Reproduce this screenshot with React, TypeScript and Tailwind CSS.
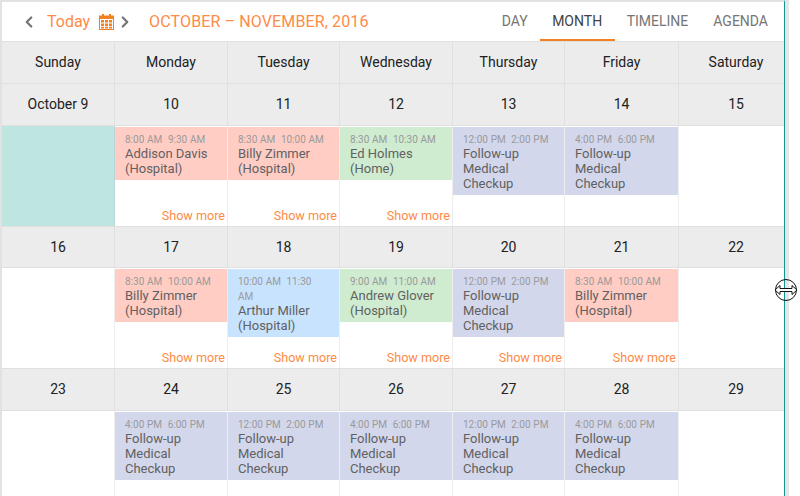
import React from "react";
import { ChevronLeft, ChevronRight } from "lucide-react";

type Ev = { time: [string, string]; lines: string[]; bg: string; h: string; more?: boolean } | null;

const COLS = "grid grid-cols-[113px_113px_112px_113px_112px_114px_105px]";
const pink = "bg-[#ffcdc4]";
const green = "bg-[#cfecd0]";
const violet = "bg-[#d3d7ec]";
const blue = "bg-[#c8e3fe]";
const h2 = "h-[53px]";
const h3 = "h-[68px]";

const followUp = ["Follow-up", "Medical", "Checkup"];
const hosp = (n: string) => [n, "(Hospital)"];

const weeks: { days: string[]; events: Ev[]; first?: boolean; dayH: string }[] = [
  {
    days: ["October 9", "10", "11", "12", "13", "14", "15"],
    first: true,
    dayH: "h-[41px]",
    events: [
      null,
      { time: ["8:00 AM", "9:30 AM"], lines: hosp("Addison Davis"), bg: pink, h: h2, more: true },
      { time: ["8:30 AM", "10:00 AM"], lines: hosp("Billy Zimmer"), bg: pink, h: h2, more: true },
      { time: ["8:30 AM", "10:30 AM"], lines: ["Ed Holmes", "(Home)"], bg: green, h: h2, more: true },
      { time: ["12:00 PM", "2:00 PM"], lines: followUp, bg: violet, h: h3 },
      { time: ["4:00 PM", "6:00 PM"], lines: followUp, bg: violet, h: h3 },
      null,
    ],
  },
  {
    days: ["16", "17", "18", "19", "20", "21", "22"],
    dayH: "h-[40px]",
    events: [
      null,
      { time: ["8:30 AM", "10:00 AM"], lines: hosp("Billy Zimmer"), bg: pink, h: h2, more: true },
      { time: ["10:00 AM", "11:30 AM"], lines: hosp("Arthur Miller"), bg: blue, h: h3, more: true },
      { time: ["9:00 AM", "11:00 AM"], lines: hosp("Andrew Glover"), bg: green, h: h2, more: true },
      { time: ["12:00 PM", "2:00 PM"], lines: followUp, bg: violet, h: h3, more: true },
      { time: ["8:30 AM", "10:00 AM"], lines: hosp("Billy Zimmer"), bg: pink, h: h2, more: true },
      null,
    ],
  },
  {
    days: ["23", "24", "25", "26", "27", "28", "29"],
    dayH: "h-[41px]",
    events: [
      null,
      { time: ["4:00 PM", "6:00 PM"], lines: followUp, bg: violet, h: h3 },
      { time: ["12:00 PM", "2:00 PM"], lines: followUp, bg: violet, h: h3 },
      { time: ["4:00 PM", "6:00 PM"], lines: followUp, bg: violet, h: h3 },
      { time: ["12:00 PM", "2:00 PM"], lines: followUp, bg: violet, h: h3 },
      { time: ["4:00 PM", "6:00 PM"], lines: followUp, bg: violet, h: h3 },
      null,
    ],
  },
];

const headers = ["Sunday", "Monday", "Tuesday", "Wednesday", "Thursday", "Friday", "Saturday"];

function CalendarIcon() {
  return (
    <svg width="15" height="16" viewBox="0 0 15 16" className="block shrink-0">
      <path d="M3 0h2v2H3zM10 0h2v2h-2z" fill="#f48120" />
      <path fillRule="evenodd" d="M0 1.5h15V16H0zM1 5v10h13V5z" fill="#f48120" />
      <path
        d="M2 6h3v2.5H2zM6 6h3v2.5H6zM10 6h3v2.5h-3zM2 9.5h3V12H2zM6 9.5h3V12H6zM10 9.5h3V12h-3zM2 12.7h3V14.5H2zM6 12.7h3V14.5H6zM10 12.7h3V14.5h-3z"
        fill="#f48120"
      />
    </svg>
  );
}

function HeadCell({ children, last, h }: { children: React.ReactNode; last?: boolean; h: string }) {
  return (
    <div
      className={`flex ${h} items-center justify-center text-[14px] text-[#212121] ${
        last ? "pl-[9px]" : "border-r border-[#e0e0e0]"
      }`}
    >
      {children}
    </div>
  );
}

function EventCell({ ev, last }: { ev: Ev; last: boolean }) {
  return (
    <div className={`relative h-[100px] overflow-hidden pt-px ${last ? "" : "border-r border-[#eeeeee]"}`}>
      {ev && (
        <div className={`${ev.bg} ${ev.h} pl-[10px] pt-[5px] text-[13px] leading-[15px] text-[#616161]`}>
          <div className="-mb-px pr-[15px] text-[10px] leading-[15px] text-[#9a9a9a] [word-spacing:0.3px]">
            {`${ev.time[0]}\u00a0 ${ev.time[1]}`}
          </div>
          {ev.lines.map((l) => (
            <div key={l}>{l}</div>
          ))}
        </div>
      )}
      {ev?.more && (
        <div className="absolute bottom-[3px] right-[2px] text-[12.6px] leading-[15px] text-[#fd8b47]">Show more</div>
      )}
    </div>
  );
}

export default function App() {
  return (
    <div className="relative flex h-[496px] w-[800px] overflow-hidden bg-white font-['Roboto',sans-serif]">
      <div className="h-full w-[785px] shrink-0 border-r border-l-2 border-t-2 border-r-[#0f9690] border-l-[#e2e2e2] border-t-[#e2e2e2]">
        <div className="flex h-[40px] items-center border-b border-[#e0e0e0]">
          <ChevronLeft size={18} strokeWidth={3} color="#757575" className="ml-[18px]" />
          <span className="ml-[9px] text-[16px] text-[#fd8b47]">Today</span>
          <span className="ml-[9px]">
            <CalendarIcon />
          </span>
          <ChevronRight size={18} strokeWidth={3} color="#757575" className="ml-[2px]" />
          <span className="ml-[15px] text-[16px] tracking-[0.13px] text-[#fd8b47]">OCTOBER – NOVEMBER, 2016</span>
          <div className="ml-auto flex h-full items-stretch text-[14px] text-[#757575]">
            <div className="flex items-center pr-[12px]">DAY</div>
            <div className="flex w-[75px] items-center justify-center border-b-2 border-[#f48120] pt-[2px] text-[#424242]">
              MONTH
            </div>
            <div className="flex items-center pl-[12px]">TIMELINE</div>
            <div className="flex items-center pl-[25px] pr-[16px]">AGENDA</div>
          </div>
        </div>
        <div className={`${COLS} border-b border-[#e0e0e0] bg-[#ececec]`}>
          {headers.map((d, i) => (
            <HeadCell key={d} last={i === 6} h="h-[41px]">
              {d}
            </HeadCell>
          ))}
        </div>
        {weeks.map((w) => (
          <div key={w.days[0]}>
            <div className={`${COLS} border-b border-[#e0e0e0] bg-[#ececec]`}>
              {w.days.map((d, i) => (
                <HeadCell key={d} last={i === 6} h={w.dayH}>
                  {d}
                </HeadCell>
              ))}
            </div>
            <div className={`${COLS} border-b border-[#e0e0e0]`}>
              {w.events.map((ev, i) =>
                i === 0 && w.first ? (
                  <div key={i} className="h-[100px] border-r border-[#b9d5dc] bg-[#bfe5e1]" />
                ) : (
                  <EventCell key={i} ev={ev} last={i === 6} />
                ),
              )}
            </div>
          </div>
        ))}
      </div>
      <div className="h-full w-[4px] shrink-0 bg-[#e6e6e6]" />
      <svg width="24" height="24" viewBox="0 0 24 24" className="absolute left-[774px] top-[278px]" fill="none">
        <circle cx="12" cy="12" r="10.5" stroke="#111" strokeWidth="1" />
        <path
          d="M1 12l5-4.5V10.5h12V7.5l5 4.5-5 4.5V13.5H6v3z"
          fill="#fff"
          stroke="#111"
          strokeWidth="1"
          strokeLinejoin="round"
        />
      </svg>
    </div>
  );
}
